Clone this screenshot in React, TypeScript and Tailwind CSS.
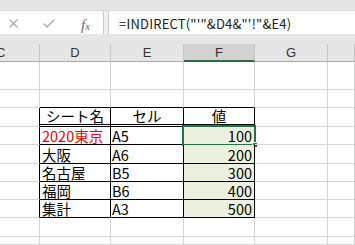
import React from "react";

const cols = [40, 71, 73, 71, 73, 27];
const rows = [28, 18, 19, 18, 19, 18, 18, 18, 19, 8];
const letters = ["C", "D", "E", "F", "G", ""];

const data: [string, string, string][] = [
  ["2020東京", "A5", "100"],
  ["大阪", "A6", "200"],
  ["名古屋", "B5", "300"],
  ["福岡", "B6", "400"],
  ["集計", "A3", "500"],
];

const jp = { fontFamily: '"Noto Sans CJK JP", "Noto Sans", sans-serif' };

function Cell({ r, c }: { r: number; c: number }) {
  const inTable = c >= 1 && c <= 3;
  let cls = "relative shrink-0 border-r border-b border-[#d4d4d4] flex items-end text-[14.5px] leading-[16px] text-black";
  if (c === 0 && r >= 2 && r <= 7) cls += " border-r-black";
  if (inTable && r === 1) cls += " border-b-black";
  if (inTable && r === 2) cls += " border-r-black border-b-[3px] border-double border-b-black justify-center";
  if (inTable && r >= 3 && r <= 7) cls += " border-r-black border-b-black";
  if (c === 3 && r >= 3 && r <= 7) cls += " bg-[#ebf1de] justify-end pr-[2px]";
  if (c === 1 && r >= 3) cls += " pl-[2px]";
  if (c === 2 && r >= 3) cls += " pl-[1px]";

  let text = "";
  let color = "";
  if (r === 2) text = ["", "シート名", "セル", "値"][c] ?? "";
  if (r >= 3 && r <= 7 && inTable) {
    text = data[r - 3][c - 1];
    if (r === 3 && c === 1) color = "text-[#f00000]";
  }

  return (
    <div className={cls} style={{ width: cols[c], height: rows[r] }}>
      {text && <span className={color}>{text}</span>}
      {r === 3 && c === 3 && (
        <>
          <div className="absolute -left-[2px] -top-[2px] -right-[2px] -bottom-[2px] border-2 border-[#217346]" />
          <div className="absolute -right-[4px] -bottom-[4px] w-[6px] h-[6px] bg-[#217346] border border-white" />
        </>
      )}
    </div>
  );
}

export default function App() {
  return (
    <div className="w-[355px] h-[245px] overflow-hidden bg-white" style={jp}>
      <div className="h-[11px] bg-[#e6e6e6] border-b border-[#d9d9d9]" />
      <div className="flex h-[23px] bg-[#f0f0f0]">
        <div className="w-[104px] bg-white border-r border-[#c8c8c8] relative">
          <svg className="absolute left-[9px] top-[8px]" width="9" height="9" viewBox="0 0 9 9">
            <path d="M0.5 0.5 L8.5 8.5 M8.5 0.5 L0.5 8.5" stroke="#a6a6a6" strokeWidth="1.2" fill="none" />
          </svg>
          <svg className="absolute left-[43px] top-[8px]" width="12" height="9" viewBox="0 0 12 9">
            <path d="M0.5 4.5 L4 8 L11.5 0.5" stroke="#a6a6a6" strokeWidth="1.3" fill="none" />
          </svg>
          <span
            className="absolute left-[81px] top-[3px] text-[15px] italic text-[#6b6b6b]"
            style={{ fontFamily: '"Liberation Serif", serif' }}
          >
            f<span className="text-[11px]">x</span>
          </span>
        </div>
        <div className="w-[4px]" />
        <div className="flex-1 bg-white border-l border-[#c8c8c8] flex items-center pl-[10px] pt-[3px] text-[13px] tracking-[0.2px] text-[#222]">
          =INDIRECT(&quot;&apos;&quot;&amp;D4&amp;&quot;&apos;!&quot;&amp;E4)
        </div>
      </div>
      <div className="h-[10px] bg-[#e6e6e6]" />
      <div className="flex h-[18px] bg-[#e6e6e6] overflow-hidden">
        {cols.map((w, i) => (
          <div
            key={i}
            className={
              "shrink-0 flex items-center text-[13px] text-[#333] border-r border-[#c4c4c4] " +
              (i === 0 ? "justify-start " : "justify-center ") +
              (i === 3 ? "bg-[#d2d2d2] border-b-2 border-b-[#217346] pt-[2px]" : "border-b border-b-[#ababab] pt-[1px]")
            }
            style={{ width: w, fontFamily: '"Liberation Sans", Arial, sans-serif' }}
          >
            <span className={i === 0 ? "-ml-[4px]" : ""}>{letters[i]}</span>
          </div>
        ))}
      </div>
      {rows.map((_, r) => (
        <div key={r} className="flex">
          {cols.map((__, c) => (
            <Cell key={c} r={r} c={c} />
          ))}
        </div>
      ))}
    </div>
  );
}
